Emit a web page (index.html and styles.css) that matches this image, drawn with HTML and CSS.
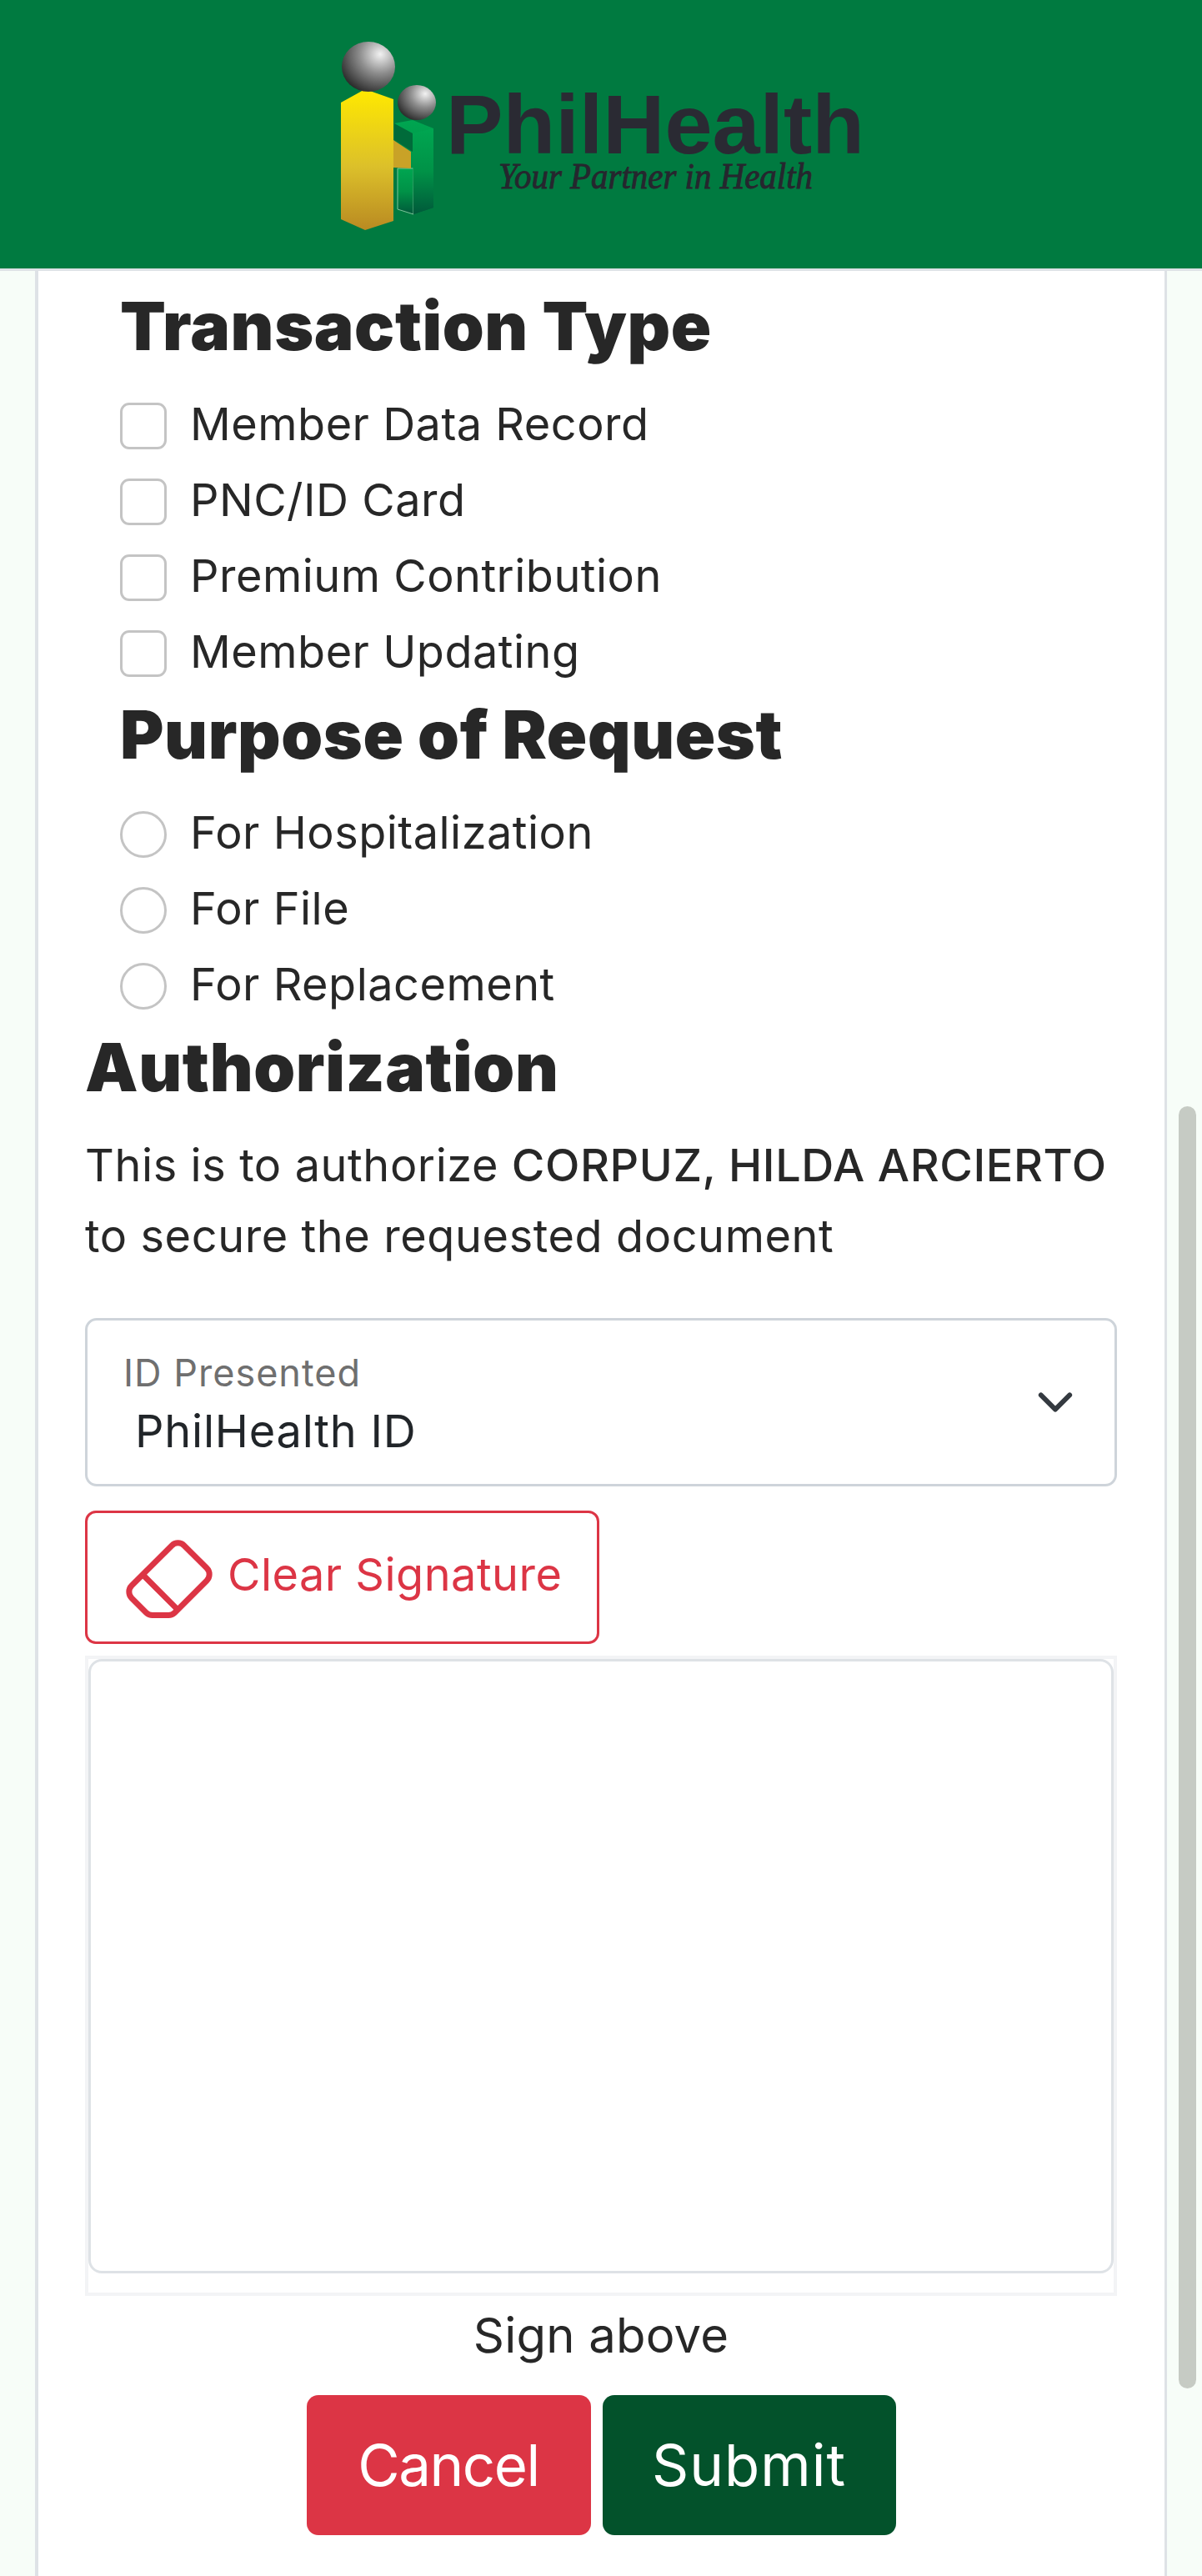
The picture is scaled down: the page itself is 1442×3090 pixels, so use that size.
FILE: index.html
```html
<!doctype html>
<html lang="en">
<head>
  <meta charset="UTF-8"/>
  <meta content="width=device-width, initial-scale=1" name="viewport">
  <title>PhilHealth Authorization</title>
  <link rel="stylesheet" href="styles.css">
</head>
<body>
<header class="topbar">
  <svg class="logo" width="1442" height="322" viewBox="0 0 1442 322" role="img" aria-label="PhilHealth logo">
    <defs>
      <radialGradient id="ball" cx="0.72" cy="0.25" r="0.85">
        <stop offset="0" stop-color="#f2f2f2"/>
        <stop offset="0.45" stop-color="#8e8e8e"/>
        <stop offset="1" stop-color="#262626"/>
      </radialGradient>
      <linearGradient id="gold" x1="0" y1="0" x2="0" y2="1">
        <stop offset="0" stop-color="#ffe900"/>
        <stop offset="0.55" stop-color="#dcc02a"/>
        <stop offset="1" stop-color="#b98a22"/>
      </linearGradient>
      <linearGradient id="leaf" x1="0" y1="0" x2="0" y2="1">
        <stop offset="0" stop-color="#00a651"/>
        <stop offset="0.5" stop-color="#009247"/>
        <stop offset="1" stop-color="#00593a"/>
      </linearGradient>
    </defs>
    <path d="M473 148 495 144 520 154V249L496 257 477 251V202H493V182L473 168Z" fill="url(#leaf)"/>
    <path d="M473 148 495 160V182L473 168Z" fill="#006b3a"/>
    <path d="M477 202V251L496 257V202Z" fill="url(#leaf)" stroke="#7fc79a" stroke-width="1"/>
    <path d="M495 160 520 154V249L496 257Z" fill="url(#leaf)"/>
    <path d="M472 168 493 182V202L472 201Z" fill="#c9a227"/>
    <path d="M409 123 438 107 472 119V265L438 276 409 263Z" fill="url(#gold)"/>
    <ellipse cx="442" cy="80" rx="32" ry="30" fill="url(#ball)"/>
    <ellipse cx="500" cy="123" rx="23" ry="21" fill="url(#ball)"/>
    <text class="logo-name" x="535" y="184" textLength="502" lengthAdjust="spacingAndGlyphs">PhilHealth</text>
    <text class="logo-tag" x="598" y="226" textLength="377" lengthAdjust="spacingAndGlyphs">Your Partner in Health</text>
  </svg>
</header>

<main class="sheet">
  <section class="group">
    <h2>Transaction Type</h2>
    <label class="choice"><input type="checkbox"><span>Member Data Record</span></label>
    <label class="choice"><input type="checkbox"><span>PNC/ID Card</span></label>
    <label class="choice"><input type="checkbox"><span>Premium Contribution</span></label>
    <label class="choice"><input type="checkbox"><span>Member Updating</span></label>
  </section>

  <section class="group">
    <h2>Purpose of Request</h2>
    <label class="choice"><input type="radio" name="purpose"><span>For Hospitalization</span></label>
    <label class="choice"><input type="radio" name="purpose"><span>For File</span></label>
    <label class="choice"><input type="radio" name="purpose"><span>For Replacement</span></label>
  </section>

  <section class="authorization">
    <h2>Authorization</h2>
    <p class="statement">This is to authorize <strong>CORPUZ, HILDA ARCIERTO</strong><br>to secure the requested document</p>

    <div class="select-box">
      <div class="select-text">
        <span class="select-label">ID Presented</span>
        <span class="select-value">PhilHealth ID</span>
      </div>
      <svg class="chevron" viewBox="0 0 16 16" width="46" height="46" fill="none" stroke="#343a40" stroke-width="2" stroke-linecap="round" stroke-linejoin="round">
        <path d="M2 5 8 11 14 5"/>
      </svg>
    </div>

    <button class="btn-clear" type="button">
      <svg viewBox="0 0 16 16" width="112" height="112" fill="currentColor">
        <path d="M8.086 2.207a2 2 0 0 1 2.828 0l3.879 3.879a2 2 0 0 1 0 2.828l-5.5 5.5A2 2 0 0 1 7.879 15H5.12a2 2 0 0 1-1.414-.586l-2.5-2.5a2 2 0 0 1 0-2.828l6.879-6.879zm2.121.707a1 1 0 0 0-1.414 0L4.16 7.547l5.293 5.293 4.633-4.633a1 1 0 0 0 0-1.414l-3.879-3.879zM8.746 13.547 3.453 8.254 1.914 9.793a1 1 0 0 0 0 1.414l2.5 2.5a1 1 0 0 0 .707.293H7.88a1 1 0 0 0 .707-.293l.16-.16z"/>
      </svg>
      <span class="btn-clear-text">Clear Signature</span>
    </button>

    <div class="signature">
      <div class="signature-pad"></div>
    </div>
    <p class="sign-above">Sign above</p>

    <div class="actions">
      <button class="btn btn-cancel" type="button">Cancel</button>
      <button class="btn btn-submit" type="button">Submit</button>
    </div>
  </section>
</main>

<div class="scroll-thumb"></div>
</body>
</html>
```

FILE: styles.css
```css
*, *:before {
  box-sizing: border-box;
}

html, body {
  height: 3090px;
  overflow: hidden;
}

body {
  margin: 0;
  background: #f7fdf8;
  color: #272727;
  font-family: Inter, "Liberation Sans", sans-serif;
  font-size: 54px;
  letter-spacing: 0.5px;
}

.topbar {
  height: 325px;
  background: #007a40;
  border-bottom: 3px solid #dee2e6;
}

.logo {
  display: block;
}

.logo-name {
  font-family: "Liberation Sans", sans-serif;
  font-weight: 700;
  font-size: 100px;
  letter-spacing: 0;
  fill: #2a2a33;
}

.logo-tag {
  font-family: "Liberation Serif", serif;
  font-style: italic;
  font-size: 44px;
  letter-spacing: 0;
  fill: #26262e;
  stroke: #26262e;
  stroke-width: 0.9px;
}

.sheet {
  width: 1358px;
  height: 2765px;
  margin-left: 42px;
  padding: 20px 57px 0 56px;
  background: #fff;
  border-left: 4px solid #dee2e6;
  border-right: 3px solid #dee2e6;
}

h2 {
  margin: 0;
  font-size: 80px;
  font-weight: 900;
  line-height: 92px;
  letter-spacing: 0.6px;
}

.group {
  padding-left: 42px;
}

.group + .group {
  margin-top: 6px;
}

.group h2 {
  margin-bottom: 28px;
}

.choice {
  display: flex;
  align-items: center;
  gap: 28px;
  height: 91px;
}

.choice span {
  margin-bottom: 4px;
}

.choice input {
  appearance: none;
  flex: none;
  width: 56px;
  height: 56px;
  margin: 0;
  background: #fff;
  border: 3px solid #c4c4c4;
  border-radius: 11px;
}

.choice input[type="radio"] {
  border-radius: 50%;
}

.authorization {
  margin-top: 6px;
}

.statement {
  margin: 29px 0 56px;
  line-height: 85px;
  letter-spacing: 0.6px;
}

.statement strong {
  font-weight: 500;
}

.select-box {
  display: flex;
  justify-content: space-between;
  align-items: center;
  height: 202px;
  padding: 0 48px 0 43px;
  border: 3px solid #ced4da;
  border-radius: 14px;
}

.select-label {
  display: block;
  color: #6f6f6f;
  font-size: 45px;
  line-height: 60px;
  letter-spacing: 1px;
}

.select-value {
  display: block;
  margin-top: 10px;
  padding-left: 14px;
  color: #212529;
  line-height: 60px;
  letter-spacing: 0.8px;
}

.btn-clear {
  display: flex;
  align-items: center;
  gap: 14px;
  width: 617px;
  height: 160px;
  margin-top: 29px;
  padding: 0 0 0 42px;
  background: #fff;
  color: #dc3545;
  border: 3px solid #dc3545;
  border-radius: 13px;
  font-family: inherit;
  font-size: 54px;
  letter-spacing: 0.5px;
}

.btn-clear-text {
  padding-bottom: 8px;
}

.signature {
  height: 768px;
  margin-top: 14px;
  border: 4px solid #f3f4f6;
}

.signature-pad {
  height: 737px;
  border: 3px solid #dee2e6;
  border-radius: 16px;
}

.sign-above {
  margin: 5px 0 0;
  font-size: 58px;
  line-height: 85px;
  letter-spacing: 0.2px;
  text-align: center;
}

.actions {
  display: flex;
  justify-content: center;
  gap: 14px;
  margin-top: 29px;
}

.btn {
  height: 168px;
  color: #fff;
  border: 0;
  border-radius: 14px;
  font-family: inherit;
  font-size: 69px;
}

.btn-cancel {
  width: 341px;
  background: #dc3545;
  letter-spacing: -1.5px;
}

.btn-submit {
  width: 352px;
  background: #03522b;
  letter-spacing: 1px;
}

.scroll-thumb {
  position: absolute;
  top: 1327px;
  left: 1414px;
  width: 21px;
  height: 1538px;
  background: #c6cbc4;
  border-radius: 11px;
}
```
